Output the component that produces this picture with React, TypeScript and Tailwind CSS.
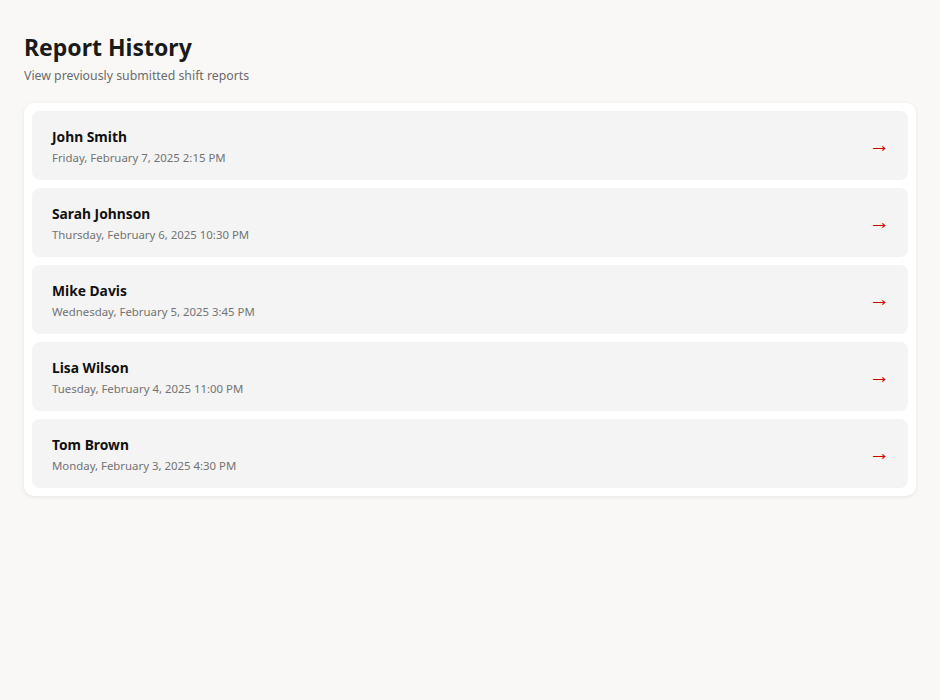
const reports = [
  { name: "John Smith", date: "Friday, February 7, 2025 2:15 PM" },
  { name: "Sarah Johnson", date: "Thursday, February 6, 2025 10:30 PM" },
  { name: "Mike Davis", date: "Wednesday, February 5, 2025 3:45 PM" },
  { name: "Lisa Wilson", date: "Tuesday, February 4, 2025 11:00 PM" },
  { name: "Tom Brown", date: "Monday, February 3, 2025 4:30 PM" },
];

export default function App() {
  return (
    <div className="min-h-screen bg-[#f9f8f6] px-6 pt-[32px] font-['Noto_Sans',sans-serif] text-[#1a1a1a]">
      <h1 className="text-[23px] font-bold leading-[30px]">Report History</h1>
      <p className="mt-[5px] text-[12.3px] leading-[18px] text-[#6b6b6b]">
        View previously submitted shift reports
      </p>

      <div className="mt-[18px] flex flex-col gap-2 rounded-[10px] bg-white p-2 shadow-[0_1px_4px_rgba(0,0,0,0.08)]">
        {reports.map((r) => (
          <div
            key={r.name}
            className="flex h-[69px] items-center justify-between rounded-lg bg-[#f4f4f4] pl-5 pr-[18px]"
          >
            <div className="flex flex-col pt-[2px]">
              <span className="text-[13.8px] font-bold leading-[20px] text-[#111]">{r.name}</span>
              <span className="mt-[2px] text-[11.4px] leading-[18px] text-[#737373]">{r.date}</span>
            </div>
            <span className="-mt-[3px] text-[21px] leading-none text-[#d40000]">→</span>
          </div>
        ))}
      </div>
    </div>
  );
}
